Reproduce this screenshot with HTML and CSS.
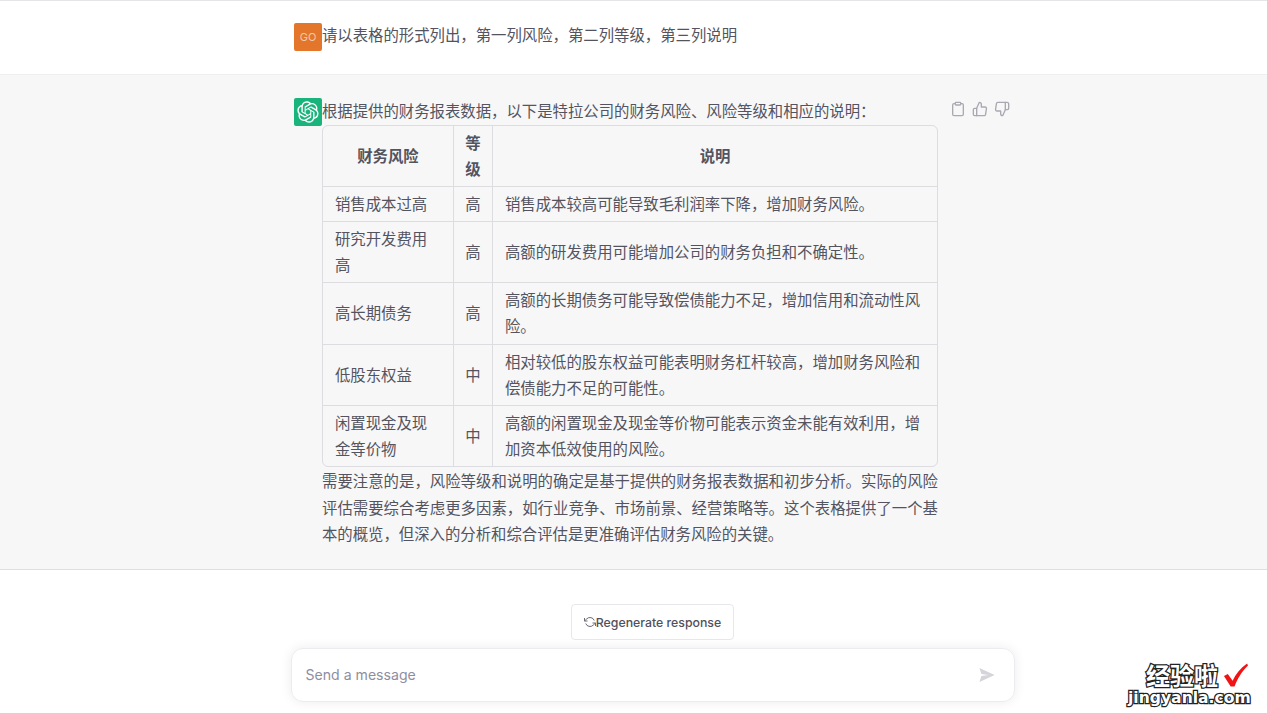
FILE: index.html
```html
<!DOCTYPE html>
<html lang="zh-CN">
<head>
    <meta charset="UTF-8">
    <meta name="viewport" content="width=device-width, initial-scale=1.0">
    <title>ChatGPT</title>
    <link rel="stylesheet" href="styles.css">
</head>
<body>
<main class="page">
    <section class="row row-user">
        <div class="message">
            <div class="avatar avatar-user">GO</div>
            <div class="content">请以表格的形式列出，第一列风险，第二列等级，第三列说明</div>
        </div>
    </section>
    <section class="row row-assistant">
        <div class="message">
            <div class="avatar avatar-bot">
                <svg viewBox="0 0 41 41" width="22" height="22" fill="currentColor">
                    <path d="M37.5324 16.8707C37.9808 15.5241 38.1363 14.0974 37.9886 12.6859C37.8409 11.2744 37.3934 9.91076 36.676 8.68622C35.6126 6.83404 33.9882 5.3676 32.0373 4.4985C30.0864 3.62941 27.9098 3.40259 25.8215 3.85078C24.8796 2.7893 23.7219 1.94125 22.4257 1.36341C21.1295 0.785575 19.7249 0.491269 18.3058 0.500197C16.1708 0.495044 14.0893 1.16803 12.3614 2.42214C10.6335 3.67624 9.34853 5.44666 8.6917 7.47815C7.30085 7.76286 5.98686 8.3414 4.8377 9.17505C3.68854 10.0087 2.73073 11.0782 2.02839 12.312C0.956464 14.1591 0.498905 16.2988 0.721698 18.4228C0.944492 20.5467 1.83612 22.5449 3.268 24.1293C2.81966 25.4759 2.66413 26.9026 2.81182 28.3141C2.95951 29.7256 3.40701 31.0892 4.12437 32.3138C5.18791 34.1659 6.8123 35.6322 8.76321 36.5013C10.7141 37.3704 12.8907 37.5973 14.9789 37.1492C15.9208 38.2107 17.0786 39.0587 18.3747 39.6366C19.6709 40.2144 21.0755 40.5087 22.4946 40.4998C24.6307 40.5054 26.7133 39.8321 28.4418 38.5772C30.1704 37.3223 31.4556 35.5506 32.1119 33.5179C33.5027 33.2332 34.8167 32.6547 35.9659 31.821C37.115 30.9874 38.0728 29.9178 38.7752 28.684C39.8458 26.8371 40.3023 24.6979 40.0789 22.5748C39.8556 20.4517 38.9639 18.4544 37.5324 16.8707ZM22.4978 37.8849C20.7443 37.8874 19.0459 37.2733 17.6994 36.1501C17.7601 36.117 17.8666 36.0586 17.936 36.0161L25.9004 31.4156C26.1003 31.3019 26.2663 31.137 26.3813 30.9378C26.4964 30.7386 26.5563 30.5124 26.5549 30.2825V19.0542L29.9213 20.998C29.9389 21.0068 29.9541 21.0198 29.9656 21.0359C29.977 21.052 29.9842 21.0707 29.9867 21.0902V30.3889C29.9842 32.375 29.1946 34.2791 27.7909 35.6841C26.3872 37.0892 24.4838 37.8806 22.4978 37.8849ZM6.39227 31.0064C5.51397 29.4888 5.19742 27.7107 5.49804 25.9832C5.55718 26.0187 5.66048 26.0818 5.73461 26.1244L13.699 30.7248C13.8975 30.8408 14.1233 30.902 14.3532 30.902C14.583 30.902 14.8088 30.8408 15.0073 30.7248L24.731 25.1103V28.9979C24.7321 29.0177 24.7283 29.0376 24.7199 29.0556C24.7115 29.0736 24.6988 29.0893 24.6829 29.1012L16.6317 33.7497C14.9096 34.7416 12.8643 35.0097 10.9447 34.4954C9.02506 33.9811 7.38785 32.7263 6.39227 31.0064ZM4.29707 13.6194C5.17156 12.0998 6.55279 10.9364 8.19885 10.3327C8.19885 10.4013 8.19491 10.5228 8.19491 10.6071V19.808C8.19351 20.0378 8.25334 20.2638 8.36823 20.4629C8.48312 20.6619 8.64893 20.8267 8.84863 20.9404L18.5723 26.5542L15.206 28.4979C15.1894 28.5089 15.1703 28.5155 15.1505 28.5173C15.1307 28.5191 15.1107 28.516 15.0924 28.5082L7.04046 23.8557C5.32135 22.8601 4.06716 21.2235 3.55289 19.3046C3.03862 17.3858 3.30624 15.3413 4.29707 13.6194ZM31.955 20.0556L22.2312 14.4411L25.5976 12.4981C25.6142 12.4872 25.6333 12.4805 25.6531 12.4787C25.6729 12.4769 25.6928 12.4801 25.7111 12.4879L33.7631 17.1364C34.9967 17.849 36.0017 18.8982 36.6606 20.1613C37.3194 21.4244 37.6047 22.849 37.4832 24.2684C37.3617 25.6878 36.8382 27.0432 35.9743 28.1759C35.1103 29.3086 33.9415 30.1717 32.6047 30.6641C32.6047 30.5947 32.6047 30.4733 32.6047 30.3889V21.188C32.6066 20.9586 32.5474 20.7328 32.4332 20.5338C32.319 20.3348 32.154 20.1698 31.955 20.0556ZM35.3055 15.0128C35.2464 14.9765 35.1431 14.9142 35.069 14.8717L27.1045 10.2712C26.906 10.1554 26.6803 10.0943 26.4504 10.0943C26.2206 10.0943 25.9948 10.1554 25.7963 10.2712L16.0726 15.8858V11.9982C16.0715 11.9783 16.0753 11.9585 16.0837 11.9405C16.0921 11.9225 16.1048 11.9068 16.1207 11.8949L24.1719 7.25025C25.4053 6.53903 26.8158 6.19376 28.2383 6.25482C29.6608 6.31589 31.0364 6.78077 32.2044 7.59508C33.3723 8.40939 34.2842 9.53945 34.8334 10.8531C35.3826 12.1667 35.5464 13.6095 35.3055 15.0128ZM14.2424 21.9419L10.8752 19.9981C10.8576 19.9893 10.8423 19.9763 10.8309 19.9602C10.8195 19.9441 10.8122 19.9254 10.8098 19.9058V10.6071C10.8107 9.18295 11.2173 7.78848 11.9819 6.58696C12.7466 5.38544 13.8377 4.42659 15.1275 3.82264C16.4173 3.21869 17.8524 2.99464 19.2649 3.1767C20.6775 3.35876 22.0089 3.93941 23.1034 4.85067C23.0427 4.88379 22.937 4.94215 22.8668 4.98473L14.9024 9.58517C14.7025 9.69878 14.5366 9.86356 14.4215 10.0626C14.3065 10.2616 14.2466 10.4877 14.2479 10.7175L14.2424 21.9419ZM16.071 17.9991L20.4018 15.4978L24.7325 17.9975V22.9985L20.4018 25.4983L16.071 22.9985V17.9991Z"/>
                </svg>
            </div>
            <div class="content">
                <p class="intro">根据提供的财务报表数据，以下是特拉公司的财务风险、风险等级和相应的说明：</p>
                <table class="risk-table">
                    <thead>
                        <tr><th class="col-risk">财务风险</th><th class="col-level">等级</th><th>说明</th></tr>
                    </thead>
                    <tbody>
                        <tr><td>销售成本过高</td><td class="level">高</td><td>销售成本较高可能导致毛利润率下降，增加财务风险。</td></tr>
                        <tr><td>研究开发费用高</td><td class="level">高</td><td>高额的研发费用可能增加公司的财务负担和不确定性。</td></tr>
                        <tr><td>高长期债务</td><td class="level">高</td><td>高额的长期债务可能导致偿债能力不足，增加信用和流动性风险。</td></tr>
                        <tr><td>低股东权益</td><td class="level">中</td><td>相对较低的股东权益可能表明财务杠杆较高，增加财务风险和偿债能力不足的可能性。</td></tr>
                        <tr><td>闲置现金及现金等价物</td><td class="level">中</td><td>高额的闲置现金及现金等价物可能表示资金未能有效利用，增加资本低效使用的风险。</td></tr>
                    </tbody>
                </table>
                <p class="note">需要注意的是，风险等级和说明的确定是基于提供的财务报表数据和初步分析。实际的风险评估需要综合考虑更多因素，如行业竞争、市场前景、经营策略等。这个表格提供了一个基本的概览，但深入的分析和综合评估是更准确评估财务风险的关键。</p>
            </div>
            <div class="actions">
                <svg viewBox="0 0 24 24" width="16" height="16"><path d="M16 4h2a2 2 0 0 1 2 2v14a2 2 0 0 1-2 2H6a2 2 0 0 1-2-2V6a2 2 0 0 1 2-2h2"/><rect x="8" y="2" width="8" height="4" rx="1"/></svg>
                <svg viewBox="0 0 24 24" width="16" height="16"><path d="M14 9V5a3 3 0 0 0-3-3l-4 9v11h11.28a2 2 0 0 0 2-1.7l1.38-9a2 2 0 0 0-2-2.3H14z"/><path d="M7 22H4a2 2 0 0 1-2-2v-7a2 2 0 0 1 2-2h3"/></svg>
                <svg viewBox="0 0 24 24" width="16" height="16"><path d="M10 15v4a3 3 0 0 0 3 3l4-9V2H5.72a2 2 0 0 0-2 1.7l-1.38 9a2 2 0 0 0 2 2.3H10z"/><path d="M17 2h2.67A2.31 2.31 0 0 1 22 4v7a2.31 2.31 0 0 1-2.33 2H17"/></svg>
            </div>
        </div>
    </section>
    <section class="composer">
        <button type="button" class="regen">
            <svg viewBox="0 0 24 24" width="12" height="12"><polyline points="1 4 1 10 7 10"/><polyline points="23 20 23 14 17 14"/><path d="M20.49 9A9 9 0 0 0 5.64 5.64L1 10m22 4l-4.64 4.36A9 9 0 0 1 3.51 15"/></svg>
            Regenerate response
        </button>
        <div class="input-box">
            <span class="placeholder">Send a message</span>
            <svg class="send" viewBox="0 0 20 20" width="16" height="16"><path d="M.5 1.2 19.5 10 .5 18.8 3 11.2 12 10 3 8.8z"/></svg>
        </div>
    </section>
</main>
<div class="watermark">
    <div class="wm-top">经验啦<svg viewBox="0 0 26 26" width="25" height="26"><path d="M1 14 5 12 10 19C13 12 18 6 25 1L26 3C19 10 15 17 12 25H8z"/></svg></div>
    <div class="wm-url">jingyanla.com</div>
</div>
</body>
</html>
```

FILE: styles.css
```css
:root {
    --text: #53545f;
    --border: #dcdce1;
    --line: #e5e5e8;
    --gray: #f7f7f8;
}
* {
    box-sizing: border-box;
}
body {
    margin: 0;
    height: 713px;
    overflow: hidden;
    background: #fff;
    color: var(--text);
    font-family: "Noto Sans CJK SC", "Noto Sans", sans-serif;
    font-size: 15.39px;
    line-height: 26.5px;
}
.row {
    padding-left: 38px;
}
.row-user {
    height: 75px;
    padding-top: 22px;
    border-top: 1px solid var(--line);
    border-bottom: 1px solid #efeff1;
}
.row-user .content {
    margin-top: -2px;
}
.row-assistant {
    height: 495px;
    padding-top: 23px;
    background: var(--gray);
    border-bottom: 1px solid #dfdfe3;
}
.message {
    width: 724px;
    margin: 0 auto;
    padding-left: 3.5px;
    display: flex;
    align-items: flex-start;
}
.avatar {
    flex: none;
    width: 28px;
    height: 28px;
    border-radius: 2px;
    display: flex;
    align-items: center;
    justify-content: center;
}
.avatar-user {
    background: #e3762a;
    color: #f0c9a6;
    font-family: "Inter", sans-serif;
    font-size: 11px;
}
.avatar-bot {
    background: #19b47c;
    color: #fff;
}
.content {
    width: 616px;
    flex: none;
}
.content p {
    margin: 0;
}
.content .intro {
    margin: -1px 0 1px;
}
.note {
    text-align: justify;
}
.risk-table {
    width: 616px;
    table-layout: fixed;
    border-collapse: separate;
    border-spacing: 0;
    border: 1px solid var(--border);
    border-radius: 6px;
    line-height: 26.15px;
}
.risk-table th,
.risk-table td {
    padding: 3px 12px 5px;
    border-right: 1px solid var(--border);
    border-bottom: 1px solid var(--border);
    font-weight: 400;
    text-align: left;
}
.risk-table th {
    font-weight: 700;
    text-align: center;
}
.risk-table th:last-child,
.risk-table td:last-child {
    border-right: none;
}
.risk-table tbody tr:last-child td {
    border-bottom: none;
}
.risk-table .col-risk {
    width: 131px;
}
.risk-table .col-level {
    width: 39px;
    padding: 3px 11px 5px;
}
.risk-table .level {
    padding: 3px 11px 5px;
    text-align: center;
}
.actions {
    margin-left: 12px;
    padding-top: 3px;
    display: flex;
    gap: 6px;
}
.actions svg {
    fill: none;
    stroke: #a9a9b2;
    stroke-width: 2;
    stroke-linecap: round;
    stroke-linejoin: round;
}
.composer {
    padding: 34px 0 0 38px;
    display: flex;
    flex-direction: column;
    align-items: center;
    gap: 8px;
}
.regen {
    height: 36px;
    padding: 0 12px;
    display: flex;
    align-items: center;
    background: #fff;
    border: 1px solid #e8e8ec;
    border-radius: 4px;
    color: #50515c;
    font-family: "Inter", sans-serif;
    font-weight: 500;
    font-size: 12.3px;
}
.regen svg {
    fill: none;
    stroke: #6b6c7a;
    stroke-width: 2;
}
.input-box {
    width: 724px;
    height: 54px;
    padding: 0 19px 0 14px;
    display: flex;
    align-items: center;
    justify-content: space-between;
    border: 1px solid #ececf0;
    border-radius: 12px;
    box-shadow: 0 0 12px rgba(0,0,0,0.08);
}
.placeholder {
    color: #8e8ea0;
    font-family: "Inter", sans-serif;
    font-size: 14.1px;
}
.send {
    fill: #d4d4da;
}
.watermark {
    position: absolute;
    left: 1128px;
    top: 662px;
    width: 124px;
    color: #fff;
}
.wm-top {
    display: flex;
    align-items: center;
    justify-content: flex-end;
    height: 26px;
    padding-right: 4px;
    font-weight: 700;
    font-size: 24px;
    line-height: 26px;
    -webkit-text-stroke: 2.5px #222;
    paint-order: stroke fill;
}
.wm-top svg {
    margin-left: 5px;
    fill: #f01414;
}
.wm-url {
    font-family: "DejaVu Sans", sans-serif;
    font-weight: 700;
    font-size: 15.6px;
    line-height: 20px;
    white-space: nowrap;
    -webkit-text-stroke: 2.5px #222;
    paint-order: stroke fill;
}
```
